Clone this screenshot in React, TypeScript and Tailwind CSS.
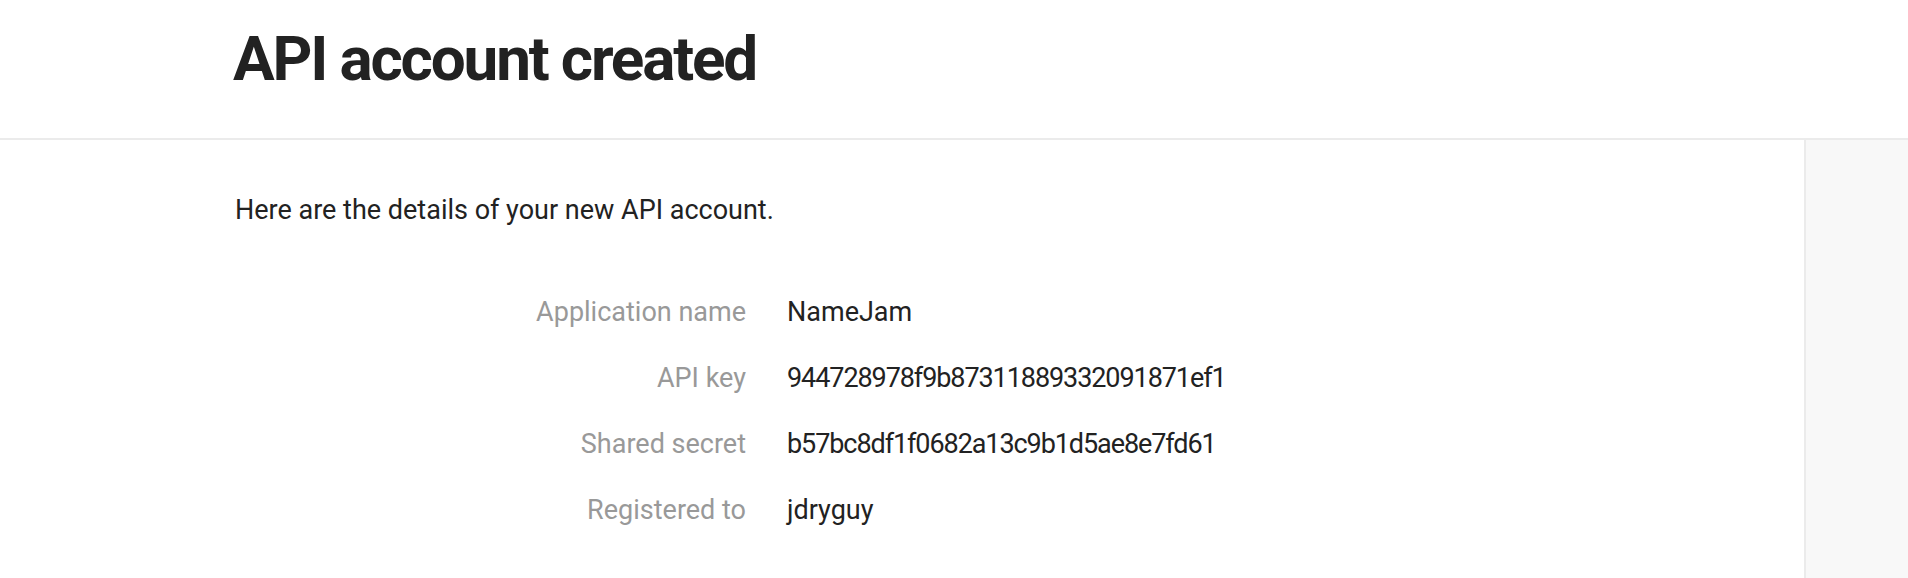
import React from 'react';

const details = [
  { label: 'Application name', value: 'NameJam', hex: false },
  { label: 'API key', value: '944728978f9b87311889332091871ef1', hex: true },
  { label: 'Shared secret', value: 'b57bc8df1f0682a13c9b1d5ae8e7fd61', hex: true },
  { label: 'Registered to', value: 'jdryguy', hex: false },
];

export default function App() {
  return (
    <div className="min-h-[578px] bg-white text-[#222222] font-['Roboto',sans-serif]">
      {/* Page header */}
      <header className="h-[140px] border-b-2 border-[#ebebeb] pl-[233px] pt-[23px]">
        <h1 className="text-[62px] leading-[72px] font-bold tracking-[-0.035em]">API account created</h1>
      </header>

      <div className="flex">
        <main className="flex-1 pl-[235px] pt-[54px]">
          <p className="text-[27px] leading-[32px]">Here are the details of your new API account.</p>

          <dl className="mt-[70px] grid grid-cols-[511px_1fr] gap-x-[41px] gap-y-[34px] text-[27px] leading-[32px]">
            {details.map((d) => (
              <React.Fragment key={d.label}>
                <dt className="text-right text-[#999999]">{d.label}</dt>
                <dd className={d.hex ? 'text-[#222222] tracking-[-0.04em]' : 'text-[#222222]'}>{d.value}</dd>
              </React.Fragment>
            ))}
          </dl>
        </main>

        {/* Sidebar */}
        <aside className="w-[104px] shrink-0 self-stretch min-h-[438px] bg-[#f8f8f8] border-l-2 border-[#ebebeb]" />
      </div>
    </div>
  );
}
